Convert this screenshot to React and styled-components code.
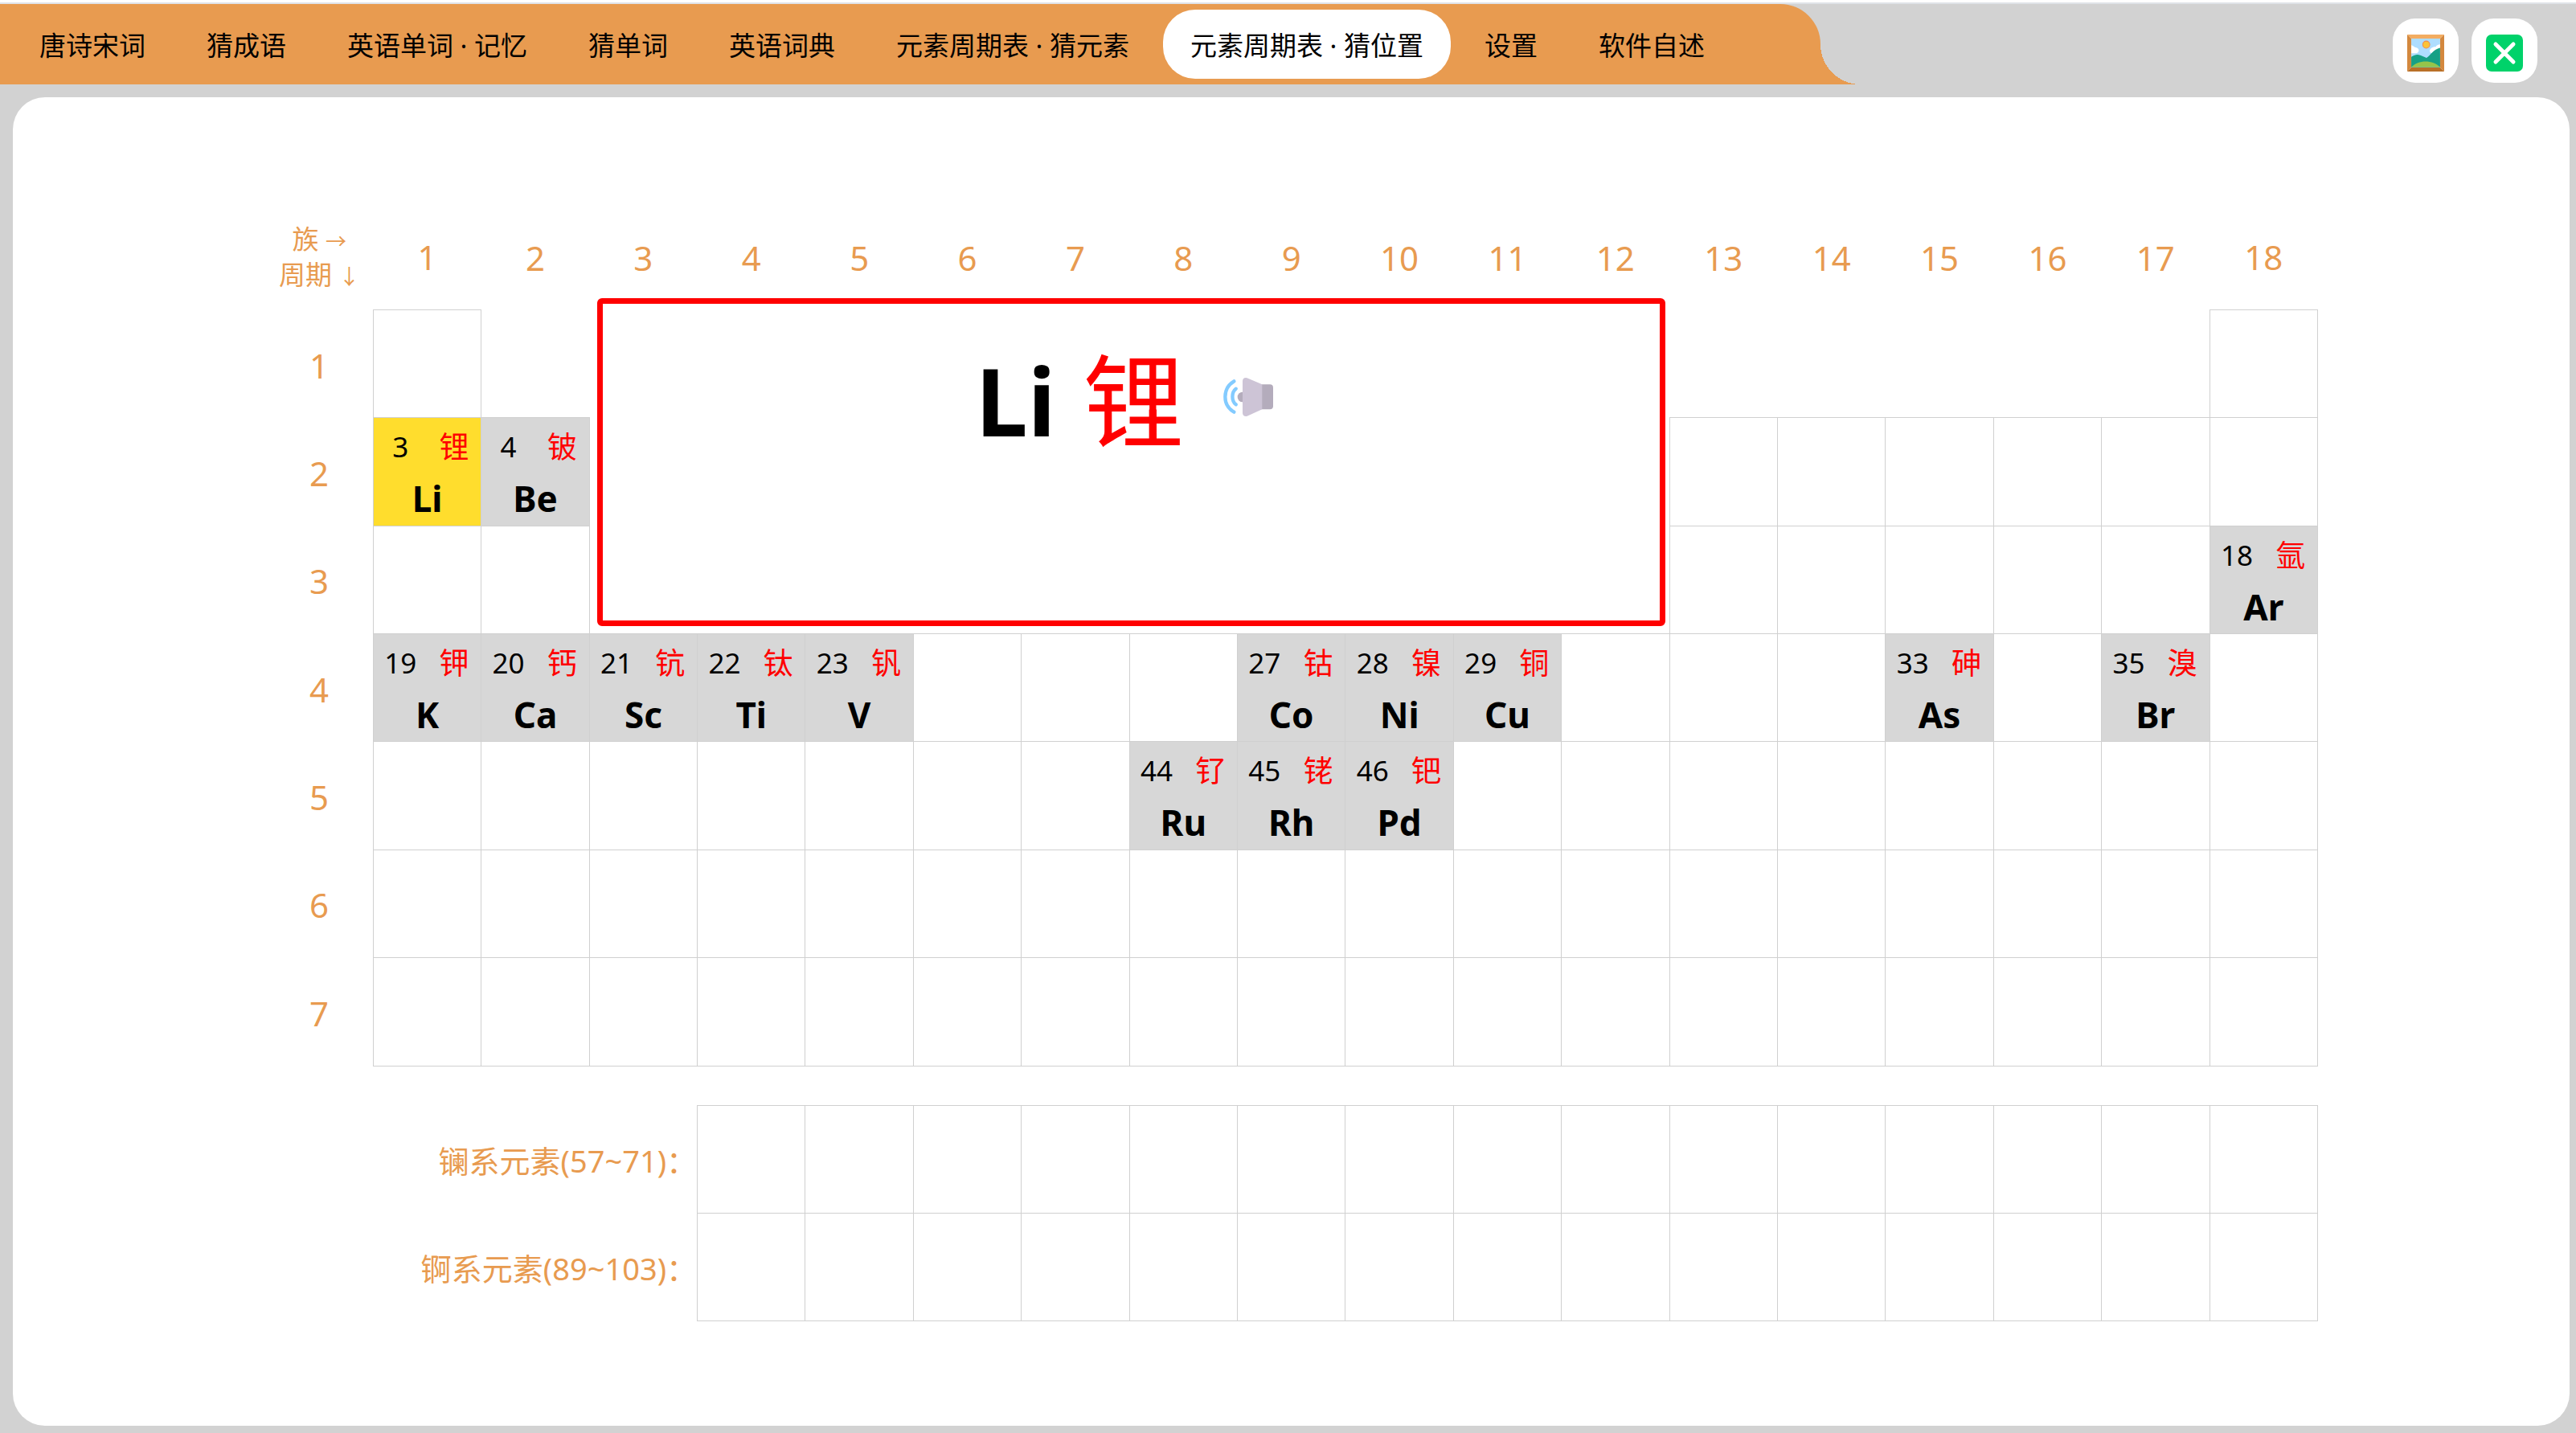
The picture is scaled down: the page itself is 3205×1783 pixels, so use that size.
import React, { useState } from 'react'
import styled, { createGlobalStyle } from 'styled-components'

const GlobalStyle = createGlobalStyle`
  * {
    box-sizing: border-box;
  }

  body {
    margin: 0;
    background: #d2d2d2;
    color: #000;
    font-family: 'Noto Sans', 'Noto Sans CJK SC', sans-serif;
  }
`

const Page = styled.div`
  display: flex;
  flex-direction: column;
  min-height: 100vh;
  border-top: 3px solid #fff;
`

const Header = styled.header`
  display: flex;
  justify-content: space-between;
  align-items: flex-start;
  height: 118px;
  border-top: 2px solid #dfe3e8;
`

const NavWrapper = styled.div`
  display: flex;
  align-items: flex-end;
`

const Nav = styled.nav`
  display: flex;
  align-items: center;
  gap: 8px;
  height: 100px;
  padding: 0 110px 0 15px;
  background: #e89b50;
  border-top-right-radius: 50px;
`

const NavTail = styled.div`
  width: 50px;
  height: 50px;
  background: radial-gradient(circle at top right, transparent 50px, #e89b50 50px);
`

const NavLink = styled.a`
  padding: 4px 34px 0;
  border-radius: 40px;
  background: ${({ $active }) => ($active ? '#fff' : 'transparent')};
  color: #000;
  font-size: 33px;
  line-height: 82px;
  text-decoration: none;
  white-space: nowrap;
`

const Actions = styled.div`
  display: flex;
  gap: 16px;
  padding: 18px 48px 0 0;
`

const IconButton = styled.button`
  display: flex;
  justify-content: center;
  width: 82px;
  height: 80px;
  padding: 20px 0 0;
  border: 0;
  border-radius: 28px;
  background: #fff;
  cursor: pointer;
`

const Panel = styled.main`
  display: flex;
  flex: 1;
  flex-direction: column;
  justify-content: center;
  gap: 48px;
  margin: 0 8px 9px 16px;
  padding: 0 313px 0 314px;
  border-radius: 40px;
  background: #fff;
`

const Table = styled.table`
  width: 100%;
  height: ${({ $height }) => $height}px;
  border-collapse: collapse;
  table-layout: fixed;
`

const HeadCell = styled.th`
  height: 134px;
  padding: 3px 0 0;
  color: #e89b50;
  font-size: 42px;
  font-weight: 400;
`

const CornerCell = styled(HeadCell)`
  font-size: 33px;
  line-height: 44px;
`

const Arrow = styled.span`
  font-family: 'Noto Sans CJK SC', sans-serif;
  font-size: 26px;
  line-height: 1;
`

const SeriesCell = styled(HeadCell)`
  padding: 0;
  font-size: 38px;
  text-align: right;
  white-space: nowrap;
`

const Cell = styled.td`
  padding: 0;
  border: 1px solid #d0d0d0;
  background: ${({ $fill }) => $fill || 'transparent'};
  vertical-align: top;
`

const BlankCell = styled.td`
  padding: 0;
`

const Element = styled.div`
  display: grid;
  grid-template-columns: 1fr 1fr;
  grid-template-rows: 72px 56px;
  font-size: 35px;
  line-height: 72px;
  text-align: center;
`

const Name = styled.span`
  color: #f00;
  font-size: 37px;
`

const Symbol = styled.strong`
  grid-column: span 2;
  font-size: 44px;
  font-weight: 700;
  line-height: 56px;
`

const CardCell = styled.td`
  position: relative;
  padding: 0;
`

const Card = styled.div`
  position: absolute;
  inset: -15px 5px 9px 9px;
  display: flex;
  justify-content: center;
  align-items: flex-start;
  padding-top: 40px;
  border: 7px solid #f00;
  border-radius: 6px;
  background: #fff;
  font-size: 116px;
  line-height: 160px;
`

const CardName = styled.span`
  margin-left: 34px;
  color: #f00;
  font-size: 126px;
`

const SoundButton = styled.button`
  display: flex;
  align-items: center;
  height: 160px;
  margin-left: 49px;
  padding: 0 16px 8px 0;
  border: 0;
  background: transparent;
  cursor: pointer;
`

const tabs = [
  '唐诗宋词',
  '猜成语',
  '英语单词 · 记忆',
  '猜单词',
  '英语词典',
  '元素周期表 · 猜元素',
  '元素周期表 · 猜位置',
  '设置',
  '软件自述'
]

const elements = {
  '2-1': { number: 3, name: '锂', symbol: 'Li' },
  '2-2': { number: 4, name: '铍', symbol: 'Be' },
  '3-18': { number: 18, name: '氩', symbol: 'Ar' },
  '4-1': { number: 19, name: '钾', symbol: 'K' },
  '4-2': { number: 20, name: '钙', symbol: 'Ca' },
  '4-3': { number: 21, name: '钪', symbol: 'Sc' },
  '4-4': { number: 22, name: '钛', symbol: 'Ti' },
  '4-5': { number: 23, name: '钒', symbol: 'V' },
  '4-9': { number: 27, name: '钴', symbol: 'Co' },
  '4-10': { number: 28, name: '镍', symbol: 'Ni' },
  '4-11': { number: 29, name: '铜', symbol: 'Cu' },
  '4-15': { number: 33, name: '砷', symbol: 'As' },
  '4-17': { number: 35, name: '溴', symbol: 'Br' },
  '5-8': { number: 44, name: '钌', symbol: 'Ru' },
  '5-9': { number: 45, name: '铑', symbol: 'Rh' },
  '5-10': { number: 46, name: '钯', symbol: 'Pd' }
}

const series = ['镧系元素(57~71)：', '锕系元素(89~103)：']

const range = length => Array.from({ length }, (_, i) => i + 1)
const groups = range(18)
const periods = range(7)

function PictureIcon() {
  return (
    <svg width="46" height="46" viewBox="0 0 136 136" aria-hidden="true">
      <path fill="#F3AD61" d="M0 0h136l-15 15H15z" />
      <path fill="#D3883E" d="M0 0l15 15v106L0 136zM136 0l-15 15v106l15 15z" />
      <path fill="#B97028" d="M0 136l15-15h106l15 15z" />
      <path fill="#AEDDFF" d="M15 15h106v106H15z" />
      <path fill="#fff" d="M15 39c9 2 11 8 16 8 16 2 15 21 0 22H15zM121 36c-8 0-14 4-16 9-14-1-20 8-22 13-1 8 5 12 12 12h26z" />
      <path fill="#16A085" d="M15 82c15-9 22-11 35-5l21 9c17-12 25-31 50-37v71H15z" />
      <path fill="#96C44A" d="M15 120c26-28 79-28 106 0z" />
      <circle cx="70" cy="37" r="13" fill="#FCC336" stroke="#F08A4B" strokeWidth="3" />
    </svg>
  )
}

function CrossIcon() {
  return (
    <svg width="46" height="46" viewBox="0 0 46 46" aria-hidden="true">
      <rect width="46" height="46" rx="7" fill="#00D26A" />
      <path d="M12 12l22 22M34 12L12 34" stroke="#fff" strokeWidth="5" strokeLinecap="round" />
    </svg>
  )
}

function SpeakerIcon() {
  return (
    <svg width="62" height="48" viewBox="0 0 186 144" aria-hidden="true">
      <circle cx="72" cy="72" r="19" fill="#B4ACBC" />
      <path fill="#B4ACBC" d="M142 25h32q12 0 12 12v69q0 12-12 12h-32z" />
      <path fill="#CDC4D6" d="M72 12Q73 0 84 0q4 0 8 2l53 23v93l-51 23q-5 3-9 3-12 0-13-12z" />
      <path
        d="M40 13C-4 40-4 102 40 128M47 41c-17 13-17 46 0 59"
        fill="none"
        stroke="#83CBFF"
        strokeWidth="13"
        strokeLinecap="round"
      />
    </svg>
  )
}

function ElementCell({ element, current }) {
  if (!element) {
    return <Cell />
  }
  return (
    <Cell $fill={current ? '#ffdd2d' : '#d7d7d7'}>
      <Element>
        <span>{element.number}</span>
        <Name>{element.name}</Name>
        <Symbol>{element.symbol}</Symbol>
      </Element>
    </Cell>
  )
}

function CurrentCard({ element }) {
  return (
    <CardCell colSpan={10} rowSpan={3}>
      <Card>
        <strong>{element.symbol}</strong>
        <CardName>{element.name}</CardName>
        <SoundButton aria-label="朗读">
          <SpeakerIcon />
        </SoundButton>
      </Card>
    </CardCell>
  )
}

function PeriodRow({ period, current }) {
  return (
    <tr>
      <HeadCell scope="row">{period}</HeadCell>
      {groups.map(group => {
        const key = period + '-' + group
        if (period === 1 && group === 3) {
          return <CurrentCard element={elements[current]} key={key} />
        }
        // the card spans groups 3 to 12 of the first three periods
        if (period <= 3 && group >= 3 && group <= 12) {
          return null
        }
        if (period === 1 && group > 1 && group < 18) {
          return <BlankCell key={key} />
        }
        return <ElementCell element={elements[key]} current={key === current} key={key} />
      })}
    </tr>
  )
}

function App() {
  const [activeTab, setActiveTab] = useState(6)

  return (
    <Page>
      <GlobalStyle />
      <Header>
        <NavWrapper>
          <Nav>
            {tabs.map((tab, i) => (
              <NavLink href="#" $active={i === activeTab} onClick={() => setActiveTab(i)} key={tab}>
                {tab}
              </NavLink>
            ))}
          </Nav>
          <NavTail />
        </NavWrapper>
        <Actions>
          <IconButton aria-label="背景">
            <PictureIcon />
          </IconButton>
          <IconButton aria-label="关闭">
            <CrossIcon />
          </IconButton>
        </Actions>
      </Header>
      <Panel>
        <Table $height={1075}>
          <thead>
            <tr>
              <CornerCell>
                族 <Arrow>→</Arrow>
                <br />
                周期 <Arrow>↓</Arrow>
              </CornerCell>
              {groups.map(group => (
                <HeadCell scope="col" key={group}>
                  {group}
                </HeadCell>
              ))}
            </tr>
          </thead>
          <tbody>
            {periods.map(period => (
              <PeriodRow period={period} current="2-1" key={period} />
            ))}
          </tbody>
        </Table>
        <Table $height={268}>
          <tbody>
            {series.map(label => (
              <tr key={label}>
                <SeriesCell scope="row" colSpan={4}>
                  {label}
                </SeriesCell>
                {range(15).map(i => (
                  <Cell key={i} />
                ))}
              </tr>
            ))}
          </tbody>
        </Table>
      </Panel>
    </Page>
  )
}

export default App
